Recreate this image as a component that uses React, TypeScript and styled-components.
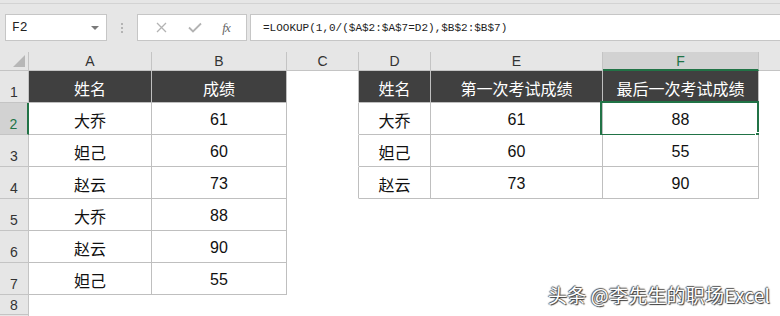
import React from "react";
import styled, { createGlobalStyle, css } from "styled-components";

const GlobalStyle = createGlobalStyle`
  html, body {
    margin: 0;
    padding: 0;
    background: #ffffff;
    overflow: hidden;
  }
  body {
    font-family: "Liberation Sans", "Noto Sans CJK SC", sans-serif;
  }
`;

const GREEN = "#217346";
const LINE = "#c4c4c4";
const HEAD_BG = "#e6e6e6";

const Page = styled.div`
  position: relative;
  width: 780px;
  height: 316px;
  overflow: hidden;
`;

const Toolbar = styled.div`
  display: flex;
  align-items: flex-start;
  height: 52px;
  padding-top: 14px;
  box-sizing: border-box;
  background: linear-gradient(
    #e6e6e6 3px,
    #d3d3d3 3px,
    #d3d3d3 4px,
    #e6e6e6 4px
  );
`;

const Box = styled.div`
  display: flex;
  align-items: center;
  height: 27px;
  box-sizing: border-box;
  background: #ffffff;
  border: 1px solid #c6c6c6;
`;

const NameBox = styled(Box)`
  position: relative;
  width: 102px;
  margin-left: 5px;
  padding-left: 6px;
  font-family: "Liberation Mono", monospace;
  font-size: 13px;
  color: #222;
`;

const DropArrow = styled.span`
  position: absolute;
  right: 7px;
  top: 11px;
  border-left: 4px solid transparent;
  border-right: 4px solid transparent;
  border-top: 4px solid #7a7a7a;
`;

const Grip = styled.div`
  display: flex;
  flex-direction: column;
  gap: 2px;
  width: 30px;
  align-items: center;
  padding-top: 9px;
`;

const Dot = styled.span`
  width: 2px;
  height: 2px;
  background: #b4b4b4;
`;

const FuncBox = styled(Box)`
  width: 110px;
  justify-content: space-around;
  padding: 0 6px 0 8px;
`;

const Fx = styled.span`
  font-family: "Liberation Serif", serif;
  font-style: italic;
  font-size: 13px;
  color: #666;
  letter-spacing: -1px;
`;

const FormulaBox = styled(Box)`
  flex: 1;
  margin-left: 3px;
  padding-left: 12px;
  border-right: none;
  font-family: "Liberation Mono", monospace;
  font-size: 11px;
  color: #222;
`;

const Sheet = styled.div`
  display: grid;
  grid-template-columns: 29px 123px 135px 72px 72px 172px 156px 22px;
  grid-template-rows: 19px repeat(7, 32px) 20px 32px;
`;

const Corner = styled.div`
  position: relative;
  background: ${HEAD_BG};
  border-right: 1px solid ${LINE};
  border-bottom: 1px solid ${LINE};
  box-sizing: border-box;
  &::after {
    content: "";
    position: absolute;
    right: 3px;
    bottom: 3px;
    border-left: 12px solid transparent;
    border-bottom: 12px solid #b7b7b7;
  }
`;

const ColHead = styled.div<{ $active?: boolean }>`
  display: flex;
  align-items: center;
  justify-content: center;
  box-sizing: border-box;
  background: ${(p) => (p.$active ? "#d2d2d2" : HEAD_BG)};
  border-right: 1px solid ${LINE};
  border-bottom: ${(p) => (p.$active ? `2px solid ${GREEN}` : `1px solid ${LINE}`)};
  font-size: 14px;
  color: ${(p) => (p.$active ? GREEN : "#333")};
  padding-top: ${(p) => (p.$active ? "1px" : "0")};
`;

const RowHead = styled.div<{ $active?: boolean; $short?: boolean }>`
  display: flex;
  align-items: flex-end;
  justify-content: center;
  box-sizing: border-box;
  overflow: hidden;
  padding-bottom: ${(p) => (p.$short ? "1px" : "2px")};
  background: ${(p) => (p.$active ? "#d2d2d2" : HEAD_BG)};
  border-right: ${(p) => (p.$active ? `2px solid ${GREEN}` : `1px solid ${LINE}`)};
  border-bottom: 1px solid ${LINE};
  font-size: 14px;
  color: ${(p) => (p.$active ? GREEN : "#333")};
`;

type Kind = "title" | "data" | "blank";

const Cell = styled.div<{ $kind: Kind; $right: boolean; $bottom: boolean }>`
  position: relative;
  display: flex;
  align-items: center;
  justify-content: center;
  box-sizing: border-box;
  padding-top: 3px;
  font-family: "Liberation Sans", "Noto Sans CJK SC", sans-serif;
  font-size: 16px;
  white-space: nowrap;
  border-right: 1px solid ${(p) => (p.$right ? "#bfbfbf" : "transparent")};
  border-bottom: 1px solid ${(p) => (p.$bottom ? "#bfbfbf" : "transparent")};
  ${(p) =>
    p.$kind === "title"
      ? css`
          background: #404040;
          color: #ffffff;
        `
      : css`
          background: #ffffff;
          color: #111;
        `}
`;

const Selection = styled.div`
  position: absolute;
  left: -3px;
  top: -2px;
  right: -1px;
  bottom: -2px;
  border: 2px solid ${GREEN};
  pointer-events: none;
  &::after {
    content: "";
    position: absolute;
    right: -5px;
    bottom: -5px;
    width: 6px;
    height: 6px;
    background: ${GREEN};
    border: 1px solid #fff;
    border-right: none;
    border-bottom: none;
  }
`;

const Watermark = styled.div`
  position: absolute;
  right: 10px;
  bottom: 8px;
  font-family: "Noto Sans CJK SC", sans-serif;
  font-size: 19px;
  color: #ffffff;
  text-shadow: 1px 1px 1px #333, -1px 0 1px #555, 0 -1px 1px #555;
  letter-spacing: 0.2px;
`;

const columns = ["A", "B", "C", "D", "E", "F", ""];

const scores = [
  ["大乔", "61"],
  ["妲己", "60"],
  ["赵云", "73"],
  ["大乔", "88"],
  ["赵云", "90"],
  ["妲己", "55"],
];

const summary = [
  ["大乔", "61", "88"],
  ["妲己", "60", "55"],
  ["赵云", "73", "90"],
];

// 9 rows x 7 cols of cell values (null = outside any table)
const buildGrid = (): (string | null)[][] => {
  const rows: (string | null)[][] = [];
  for (let r = 0; r < 9; r++) rows.push(Array(7).fill(null));
  rows[0][0] = "姓名";
  rows[0][1] = "成绩";
  scores.forEach((s, i) => {
    rows[i + 1][0] = s[0];
    rows[i + 1][1] = s[1];
  });
  rows[0][3] = "姓名";
  rows[0][4] = "第一次考试成绩";
  rows[0][5] = "最后一次考试成绩";
  summary.forEach((s, i) => {
    rows[i + 1][3] = s[0];
    rows[i + 1][4] = s[1];
    rows[i + 1][5] = s[2];
  });
  return rows;
};

const grid = buildGrid();
const inTable = (r: number, c: number) =>
  r >= 0 && r < grid.length && c >= 0 && c < 7 && grid[r][c] !== null;

const CloseIcon = () => (
  <svg width="11" height="11" viewBox="0 0 11 11">
    <path d="M1 1 L10 10 M10 1 L1 10" stroke="#b3b3b3" strokeWidth="1.3" fill="none" />
  </svg>
);

const CheckIcon = () => (
  <svg width="14" height="11" viewBox="0 0 14 11">
    <path d="M1 5.5 L5 9.5 L13 1.5" stroke="#b3b3b3" strokeWidth="1.8" fill="none" />
  </svg>
);

const App: React.FC = () => {
  return (
    <Page>
      <GlobalStyle />
      <Toolbar>
        <NameBox>
          F2
          <DropArrow />
        </NameBox>
        <Grip>
          <Dot />
          <Dot />
          <Dot />
        </Grip>
        <FuncBox>
          <CloseIcon />
          <CheckIcon />
          <Fx>fx</Fx>
        </FuncBox>
        <FormulaBox>=LOOKUP(1,0/($A$2:$A$7=D2),$B$2:$B$7)</FormulaBox>
      </Toolbar>
      <Sheet>
        <Corner />
        {columns.map((c, i) => (
          <ColHead key={i} $active={c === "F"}>
            {c}
          </ColHead>
        ))}
        {grid.map((row, r) => (
          <React.Fragment key={r}>
            <RowHead $active={r === 1} $short={r === 7}>
              {r < 8 ? r + 1 : ""}
            </RowHead>
            {row.map((v, c) => (
              <Cell
                key={c}
                $kind={r === 0 && v !== null ? "title" : v !== null ? "data" : "blank"}
                $right={inTable(r, c) || inTable(r, c + 1)}
                $bottom={inTable(r, c) || inTable(r + 1, c)}
              >
                {v}
                {r === 1 && c === 5 && <Selection />}
              </Cell>
            ))}
          </React.Fragment>
        ))}
      </Sheet>
      <Watermark>头条 @李先生的职场Excel</Watermark>
    </Page>
  );
};

export default App;
